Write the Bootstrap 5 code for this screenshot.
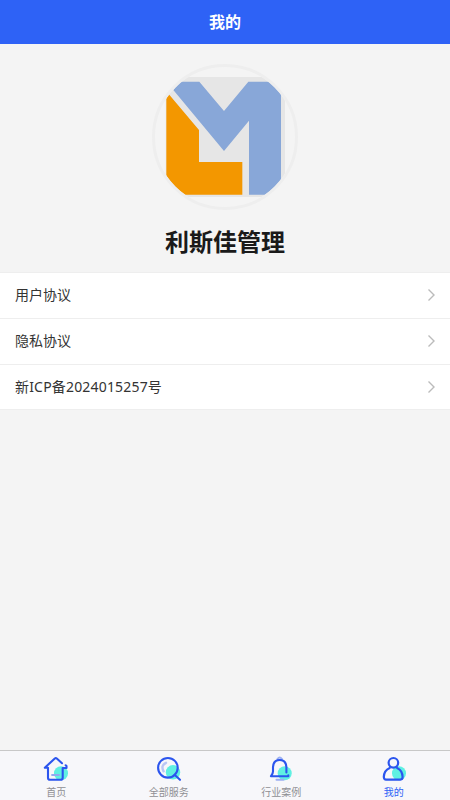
<!DOCTYPE html>
<html lang="zh-CN">
<head>
<meta charset="utf-8">
<meta name="viewport" content="width=device-width, initial-scale=1">
<title>我的</title>
<link href="https://cdn.jsdelivr.net/npm/bootstrap@5.3.0/dist/css/bootstrap.min.css" rel="stylesheet">
<style>
body{background:#f4f4f4;font-family:"Noto Sans","Noto Sans CJK SC",sans-serif;color:#333}
.topbar{height:44px;background:#2e62f6;font-size:16px;line-height:44px}
.logo{width:146px;height:146px;margin-top:20px}
.brand-name{font-size:24px;line-height:32px;margin:16px 0 14px;color:#1a1a1a}
.menu{border-top:1px solid #eee;border-bottom:1px solid #eee}
.menu-row{height:46px;padding:0 13px 2px 15px;font-size:14px;border-bottom:1px solid #eee;color:#333}
.menu-row:last-child{height:44px;padding-bottom:1px;border-bottom:0}
.digits{letter-spacing:.18px}
.tabs{height:50px;background:#f7f7fa;border-top:1px solid #c8c8c8}
.tab{font-size:10px;line-height:14px;color:#8f8f94;padding-top:4px}
.tab svg{width:28px;height:28px;margin-bottom:2px}
.tab.current{color:#2e62f6}
</style>
</head>
<body class="d-flex flex-column vh-100 overflow-hidden">
<header class="topbar text-white text-center fw-bold">我的</header>
<main class="flex-grow-1">
  <div class="d-flex flex-column align-items-center">
    <svg class="logo" viewBox="21 27 438 438">
      <defs><clipPath id="round"><circle cx="240" cy="246" r="211"/></clipPath></defs>
      <g clip-path="url(#round)">
        <path fill="#e6e6e6" d="M62 66H420V426H62z"/>
        <path fill="#88a7d8" d="M85 105 107 80H163L237 168 310 80H408V419H312V197L237 288z"/>
        <path fill="#f39700" d="M64 109 162 225V321H292V419H64z"/>
      </g>
      <circle cx="240" cy="246" r="214.5" fill="none" stroke="#eee" stroke-width="9"/>
    </svg>
    <h1 class="brand-name fw-bold">利斯佳管理</h1>
  </div>
  <div class="menu bg-white">
    <a class="menu-row d-flex align-items-center justify-content-between text-decoration-none" href="#"><span>用户协议</span><svg width="12" height="14" viewBox="0 0 12 14" fill="none" stroke="#bbb" stroke-width="1.4"><path d="M3.5 1.5 9 7 3.5 12.5"/></svg></a>
    <a class="menu-row d-flex align-items-center justify-content-between text-decoration-none" href="#"><span>隐私协议</span><svg width="12" height="14" viewBox="0 0 12 14" fill="none" stroke="#bbb" stroke-width="1.4"><path d="M3.5 1.5 9 7 3.5 12.5"/></svg></a>
    <a class="menu-row d-flex align-items-center justify-content-between text-decoration-none" href="#"><span class="digits">新ICP备2024015257号</span><svg width="12" height="14" viewBox="0 0 12 14" fill="none" stroke="#bbb" stroke-width="1.4"><path d="M3.5 1.5 9 7 3.5 12.5"/></svg></a>
  </div>
</main>
<nav class="tabs d-flex">
  <a class="tab col-3 d-flex flex-column align-items-center text-decoration-none" href="#">
    <svg viewBox="0 0 28 28" fill="none" stroke-linecap="round" stroke-linejoin="round"><circle cx="19" cy="18.3" r="7" fill="#5ff0e2"/><path d="M10 20h7" stroke="#91a9f0" stroke-width="1.8"/><path d="M20 8.2 14.8 3.5Q13.8 2.7 12.8 3.5L2.8 12.7H6V22.7Q6 24.8 8 24.8H18.7Q20.7 24.8 20.7 22.7V13H24.5V11L23.7 10.3" stroke="#2b55ee" stroke-width="2.1"/></svg>首页</a>
  <a class="tab col-3 d-flex flex-column align-items-center text-decoration-none" href="#">
    <svg viewBox="0 0 28 28" fill="none" stroke-linecap="round"><circle cx="18" cy="17.3" r="7.2" fill="#5ff0e2"/><path d="M8.6 16.3Q5.4 10.5 11 7.8" stroke="#b9c6f5" stroke-width="2.4"/><circle cx="12.9" cy="12.8" r="9.8" stroke="#2b55ee" stroke-width="2.1"/><path d="M19.6 19.7 25 24.8" stroke="#2b55ee" stroke-width="2.1"/></svg>全部服务</a>
  <a class="tab col-3 d-flex flex-column align-items-center text-decoration-none" href="#">
    <svg viewBox="0 0 28 28" fill="none" stroke-linecap="round" stroke-linejoin="round"><circle cx="17.7" cy="18.3" r="7" fill="#5ff0e2"/><path d="M10.6 3.8Q12.7 1.3 14.8 3.8M9.5 24.8H16.5" stroke="#9db0f2" stroke-width="2"/><path d="M19.4 17.5V12Q19 5 12.7 5T6 12V16.5Q6 18.5 4 21.2H21.3V20.2" stroke="#2b55ee" stroke-width="2.1"/></svg>行业案例</a>
  <a class="tab current col-3 d-flex flex-column align-items-center text-decoration-none" href="#">
    <svg viewBox="0 0 28 28" fill="none" stroke-linecap="round" stroke-linejoin="round"><circle cx="19" cy="18.3" r="7" fill="#5ff0e2"/><circle cx="13.4" cy="7.8" r="4.8" stroke="#2b55ee" stroke-width="2.2"/><path d="M9.7 13Q4 15.5 3.8 22Q4 24.6 6 24.6H20.4Q22.6 24.4 22.6 22Q22.4 15.5 17.1 13" stroke="#2b55ee" stroke-width="2.2"/></svg>我的</a>
</nav>
<script src="https://cdn.jsdelivr.net/npm/bootstrap@5.3.0/dist/js/bootstrap.bundle.min.js"></script>
</body>
</html>
